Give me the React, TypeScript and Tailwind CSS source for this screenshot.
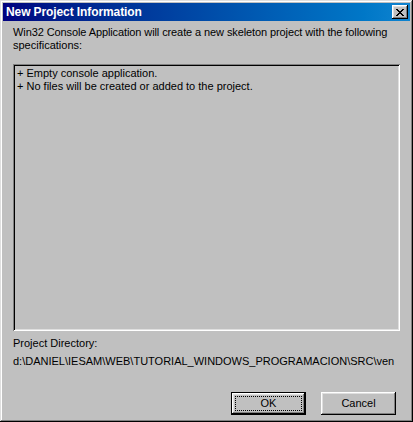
import React from "react";

const font = { fontFamily: '"Liberation Sans", Arial, sans-serif' };

function CloseGlyph() {
  return (
    <svg width="8" height="7" viewBox="0 0 8 7" shapeRendering="crispEdges">
      <path
        d="M0 0h2v1H0zM6 0h2v1H6zM1 1h2v1H1zM5 1h2v1H5zM2 2h4v1H2zM3 3h2v1H3zM2 4h4v1H2zM1 5h2v1H1zM5 5h2v1H5zM0 6h2v1H0zM6 6h2v1H6z"
        fill="#000"
      />
    </svg>
  );
}

export default function App() {
  return (
    <div
      className="w-[413px] h-[422px] bg-[#c0c0c0] p-[3px] flex flex-col text-[11px] leading-[13px] text-black shadow-[inset_-1px_-1px_#000,inset_1px_1px_#dfdfdf,inset_-2px_-2px_#808080,inset_2px_2px_#fff]"
      style={font}
    >
      {/* Title bar */}
      <div className="h-[18px] flex items-center justify-between pl-[3px] pr-[2px] bg-gradient-to-r from-[#000080] to-[#1084d0]">
        <span className="text-white font-bold text-[12px] leading-[14px] tracking-[-0.1px]">New Project Information</span>
        <div className="w-[16px] h-[14px] bg-[#c0c0c0] flex items-center justify-center shadow-[inset_-1px_-1px_#000,inset_1px_1px_#fff,inset_-2px_-2px_#808080,inset_2px_2px_#dfdfdf]">
          <CloseGlyph />
        </div>
      </div>

      {/* Body */}
      <div className="flex flex-col flex-1 px-[10px]">
        <div className="mt-[5px]">
          <div className="tracking-[-0.1px]">Win32 Console Application will create a new skeleton project with the following</div>
          <div>specifications:</div>
        </div>

        <div className="mt-[12px] h-[267px] px-[4px] py-[3px] shadow-[inset_1px_1px_#808080,inset_-1px_-1px_#fff,inset_2px_2px_#000,inset_-2px_-2px_#dfdfdf]">
          <div>+ Empty console application.</div>
          <div>+ No files will be created or added to the project.</div>
        </div>

        <div className="mt-[6px]">Project Directory:</div>
        <div className="mt-[5px] whitespace-nowrap">
          d:\DANIEL\IESAM\WEB\TUTORIAL_WINDOWS_PROGRAMACION\SRC\ven
        </div>

        <div className="mt-[24px] flex justify-end gap-[15px] pr-[4px]">
          <div className="w-[75px] h-[23px] border border-black bg-[#c0c0c0] shadow-[inset_-1px_-1px_#000,inset_1px_1px_#fff,inset_-2px_-2px_#808080,inset_2px_2px_#dfdfdf] p-[3px]">
            <div className="w-full h-full border border-dotted border-black flex items-center justify-center">
              OK
            </div>
          </div>
          <div className="w-[75px] h-[23px] bg-[#c0c0c0] flex items-center justify-center shadow-[inset_-1px_-1px_#000,inset_1px_1px_#fff,inset_-2px_-2px_#808080,inset_2px_2px_#dfdfdf]">
            Cancel
          </div>
        </div>
      </div>
    </div>
  );
}
